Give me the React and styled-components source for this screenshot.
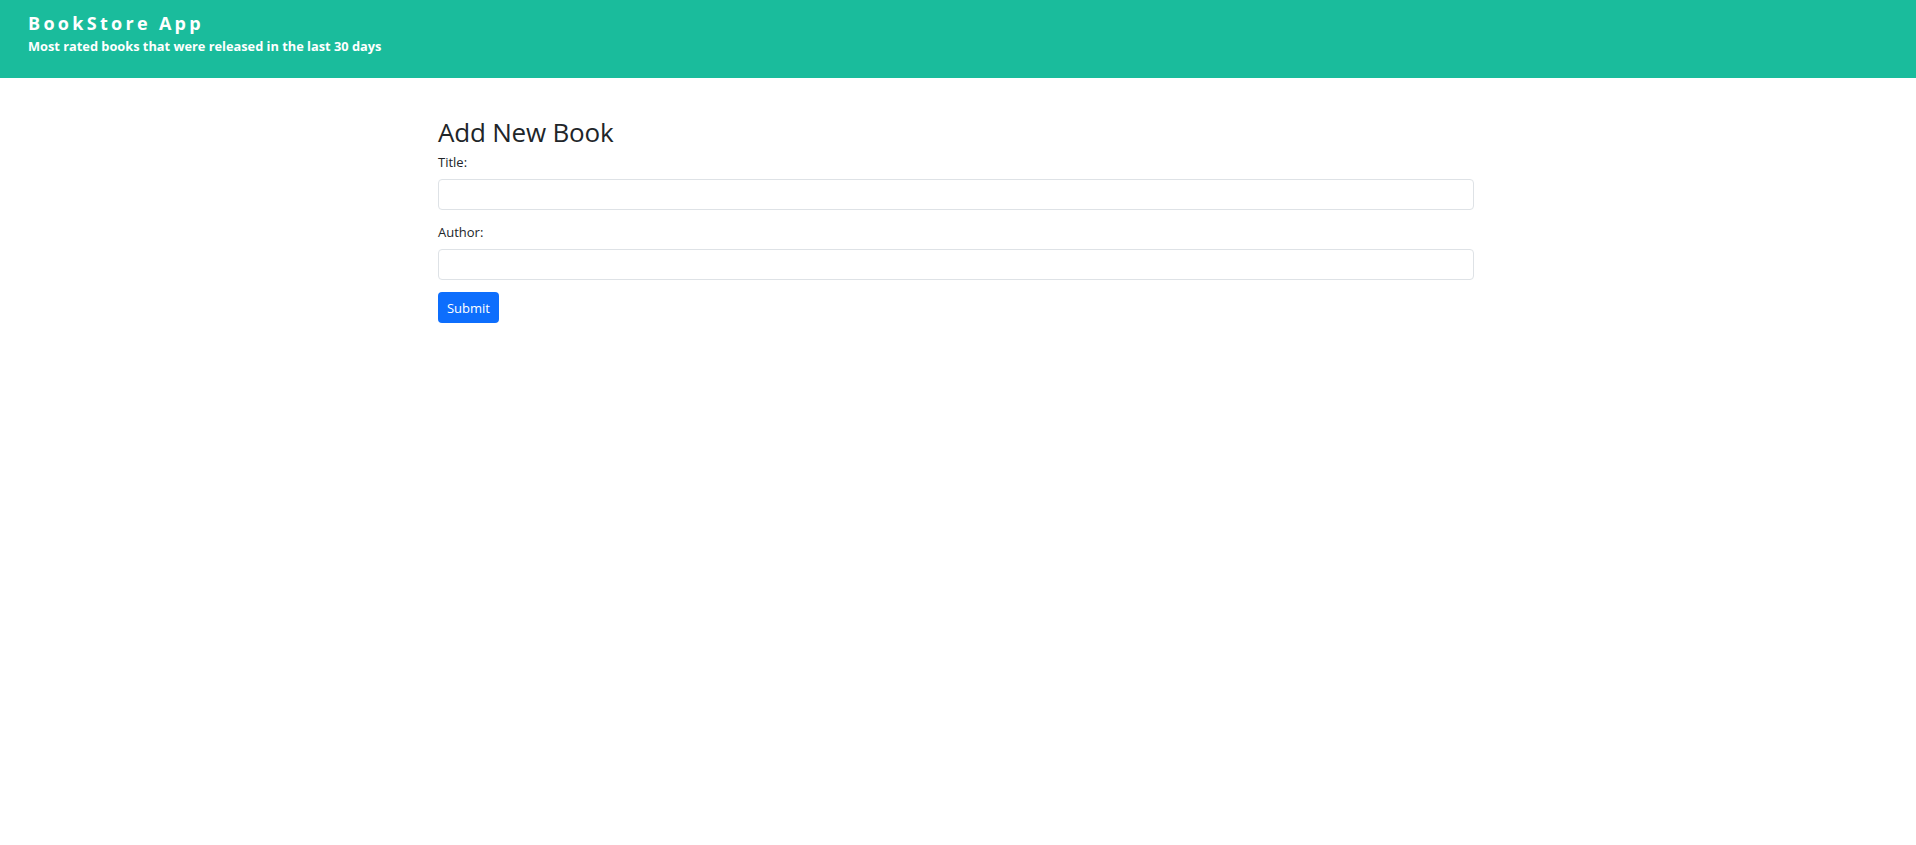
import React from "react";
import styled, { createGlobalStyle } from "styled-components";

const Global = createGlobalStyle`
  html, body { margin: 0; padding: 0; background: #fff; }
  body { font-family: "Open Sans", "Noto Sans", sans-serif; color: #212529; }
  * { box-sizing: border-box; }
`;

const Header = styled.header`
  background: #1abc9c;
  height: 78px;
  padding: 11px 28px 0;
  color: #fff;
`;

const Brand = styled.h1`
  margin: 0;
  font-size: 18px;
  font-weight: 700;
  letter-spacing: 3.3px;
  line-height: 24px;
`;

const Tagline = styled.p`
  margin: 2px 0 0;
  font-size: 12.8px;
  font-weight: 700;
  line-height: 18px;
`;

const Main = styled.main`
  width: 1036px;
  margin: 38px auto 0;
  position: relative;
  left: -2px;
`;

const Title = styled.h3`
  margin: 0 0 4px;
  font-size: 26px;
  font-weight: 500;
  letter-spacing: -0.2px;
  line-height: 32px;
`;

const Field = styled.div`
  margin-bottom: 12px;
`;

const Label = styled.label`
  display: block;
  font-size: 13px;
  line-height: 21px;
  margin-bottom: 6px;
`;

const Input = styled.input`
  display: block;
  width: 100%;
  height: 31px;
  border: 1px solid #dee2e6;
  border-radius: 4px;
  padding: 4px 8px;
  font: inherit;
  font-size: 14px;
  outline: none;
`;

const Button = styled.button`
  display: inline-block;
  height: 31px;
  width: 61px;
  padding: 0 8px;
  border: none;
  border-radius: 4px;
  background: #0d6efd;
  color: #fff;
  font-family: inherit;
  font-size: 13px;
  cursor: pointer;
`;

export default function App() {
  return (
    <>
      <Global />
      <Header>
        <Brand>BookStore App</Brand>
        <Tagline>Most rated books that were released in the last 30 days</Tagline>
      </Header>
      <Main>
        <Title>Add New Book</Title>
        <form onSubmit={(e) => e.preventDefault()}>
          <Field>
            <Label htmlFor="title">Title:</Label>
            <Input id="title" type="text" />
          </Field>
          <Field>
            <Label htmlFor="author">Author:</Label>
            <Input id="author" type="text" />
          </Field>
          <Button type="submit">Submit</Button>
        </form>
      </Main>
    </>
  );
}
